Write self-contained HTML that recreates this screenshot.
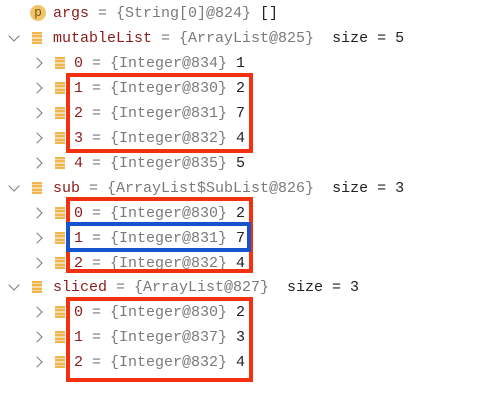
<!DOCTYPE html><html><head><style>
body{margin:0;width:495px;height:407px;background:#fff;position:relative;overflow:hidden;font-family:"Liberation Mono",monospace;font-size:15px}
.r{position:absolute;height:25px;line-height:25px;white-space:pre;left:0}
.n{color:#8b1c1c}.g{color:#7a7a7a}.k{color:#222}
.ch{position:absolute;width:7px;height:7px;border-right:1.3px solid #777;border-bottom:1.3px solid #777}
.ic{position:absolute;width:10px;height:12px;background:repeating-linear-gradient(#f0b54c 0 2.4px,#fff 2.4px 3.2px)}
.b{position:absolute;box-sizing:border-box;border:4px solid #f3300f}
</style></head><body>
<div class="r" style="top:1px"><span style="position:absolute;left:30px;top:4px;width:16px;height:16px;border-radius:50%;background:#f2c46a;color:#7a5a10;font-size:13px;line-height:15px;text-align:center">p</span><span style="position:absolute;left:53px"><span class="n">args</span><span class="g"> = {String[0]@824} </span><span class="k">[]</span></span></div>

<div id="rows"></div>
<script>
var rows=[
[0,'mutableList','{ArrayList@825}','  size = 5'],
[1,'0','{Integer@834}',' 1'],[1,'1','{Integer@830}',' 2'],[1,'2','{Integer@831}',' 7'],[1,'3','{Integer@832}',' 4'],[1,'4','{Integer@835}',' 5'],
[0,'sub','{ArrayList$SubList@826}','  size = 3'],
[1,'0','{Integer@830}',' 2'],[1,'1','{Integer@831}',' 7'],[1,'2','{Integer@832}',' 4'],
[0,'sliced','{ArrayList@827}','  size = 3'],
[1,'0','{Integer@830}',' 2'],[1,'1','{Integer@837}',' 3'],[1,'2','{Integer@832}',' 4']];
var h='';
rows.forEach(function(r,i){
 var top=1+24.95*(i+1), l=r[0];
 var chx=l?33:9, icx=l?55:32, tx=l?74:53;
 var chstyle=l?'transform:rotate(-45deg);left:'+chx+'px;top:8px':'transform:rotate(45deg);left:'+(chx+1)+'px;top:6px';
 h+='<div class="r" style="top:'+top+'px;width:495px"><span class="ch" style="'+chstyle+'"></span><span class="ic" style="left:'+icx+'px;top:6px"></span><span style="position:absolute;left:'+tx+'px"><span class="n">'+r[1]+'</span><span class="g"> = '+r[2]+'</span><span class="k">'+r[3]+'</span></span></div>';
});
document.getElementById('rows').innerHTML=h;
</script>
<div class="b" style="left:66px;top:73px;width:187px;height:80px"></div>
<div class="b" style="left:66px;top:197px;width:187px;height:76px"></div>
<div class="b" style="left:66px;top:222px;width:185px;height:30px;border-color:#1553cf"></div>
<div class="b" style="left:66px;top:297px;width:187px;height:85px"></div>
</body></html>
